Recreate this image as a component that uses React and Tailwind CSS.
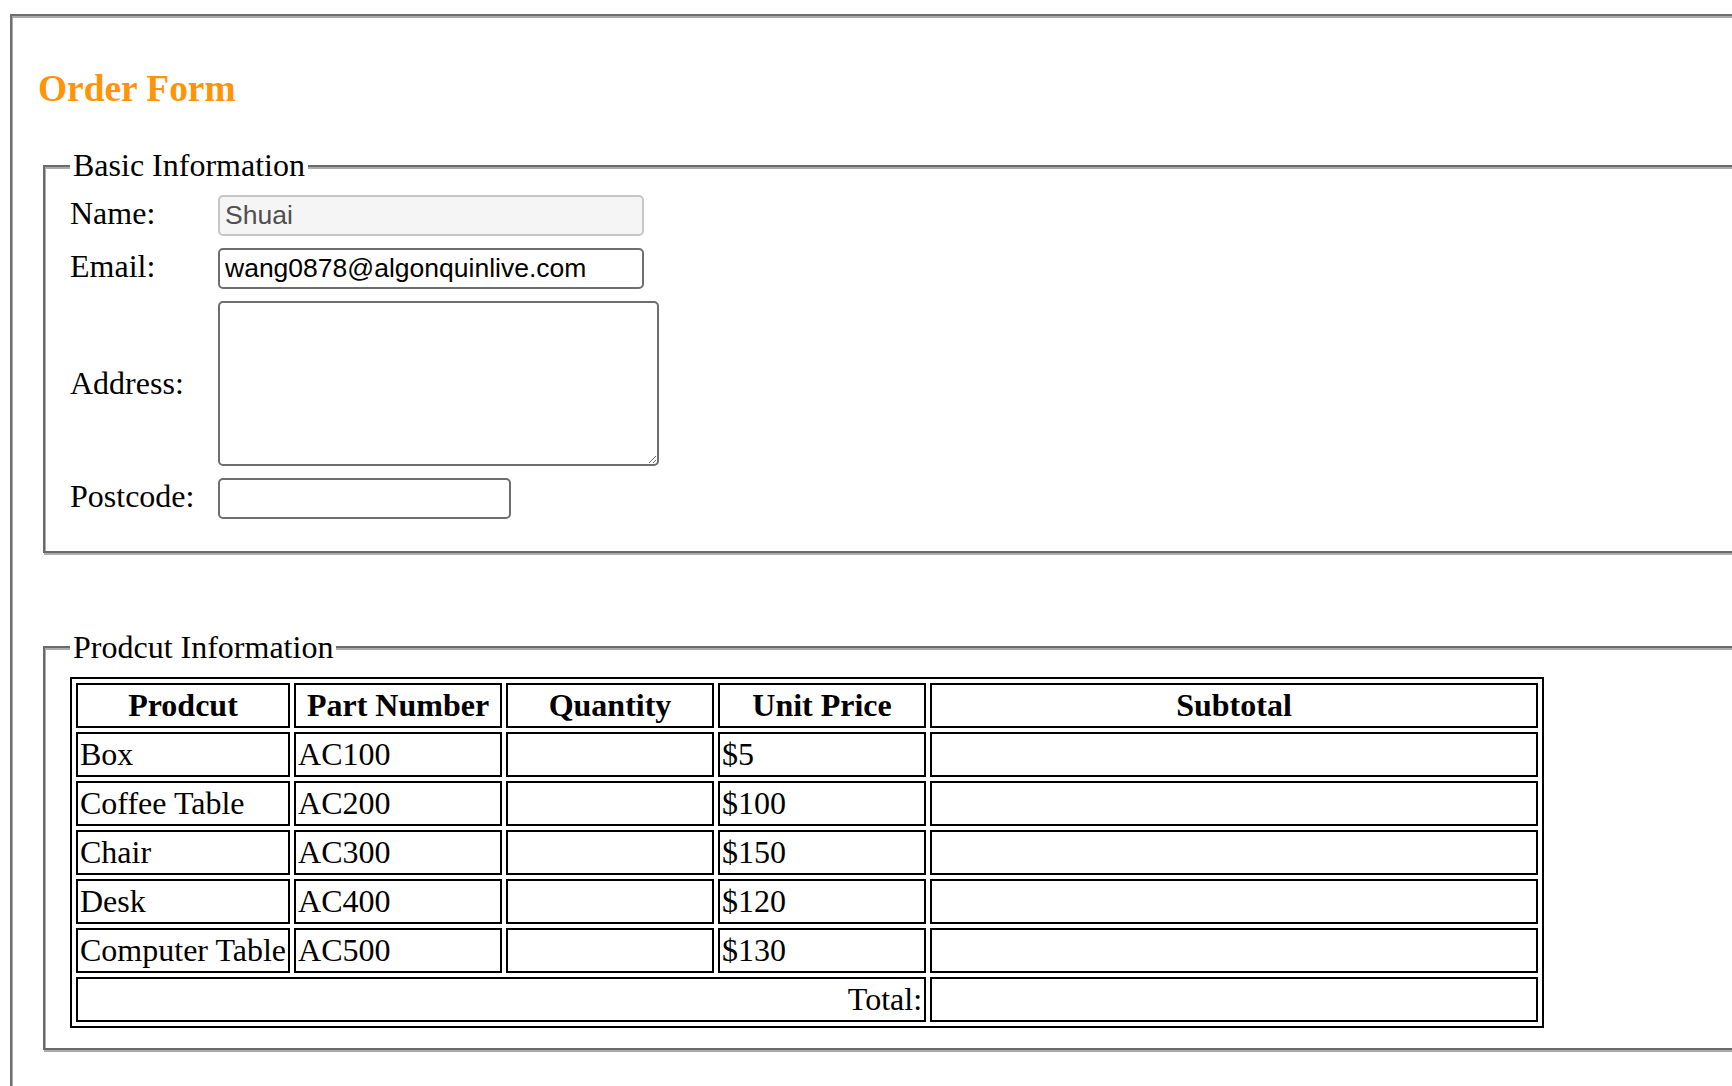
import React from 'react';

const PRODUCTS = [
  { name: 'Box', part: 'AC100', price: '$5' },
  { name: 'Coffee Table', part: 'AC200', price: '$100' },
  { name: 'Chair', part: 'AC300', price: '$150' },
  { name: 'Desk', part: 'AC400', price: '$120' },
  { name: 'Computer Table', part: 'AC500', price: '$130' },
];

const cell = 'border-2 border-black p-[2px] leading-[37px]';
const field = 'h-[41px] rounded-[5px] border-2 px-[5px] font-["Liberation_Sans",Arial,sans-serif] text-[26.5px] outline-none';

const Row = ({ label, lift, children }) => (
  <div className="flex items-center">
    <span className={lift ? 'w-[148px] pb-[4px] leading-[37px]' : 'w-[148px] leading-[37px]'}>{label}</span>
    {children}
  </div>
);

export default function App() {
  return (
    <div className="h-screen w-full overflow-hidden bg-white font-['Liberation_Serif','Times_New_Roman',serif] text-[32px] text-black">
      {/* outer frame */}
      <div className="ml-[10px] mt-[14px] min-h-[1100px] w-[1800px] border-l-2 border-t-2 border-[#6f6f6f] pl-[26px] pt-[51px] shadow-[inset_1px_2px_0_#ababab]">
        <h3 className="text-[37.4px] font-bold leading-[43px] text-[#ff9408]">Order Form</h3>

        {/* Basic Information */}
        <fieldset className="ml-[5px] mt-[37px] border-2 border-[#6a6a6a] pb-[31.5px] pl-[25px] pt-[11px] shadow-[inset_1px_2px_0_#ababab,1px_2px_0_#ababab]">
          <legend className="bg-white px-[3px] leading-[37px]">Basic Information</legend>
          <div className="flex flex-col gap-[12px]">
            <Row label="Name:" lift>
              <input
                type="text"
                value="Shuai"
                readOnly
                className={`${field} w-[426px] border-[#c6c6c6] bg-[#f5f5f5] text-[#4f4f4f]`}
              />
            </Row>
            <Row label="Email:" lift>
              <input
                type="text"
                defaultValue="wang0878@algonquinlive.com"
                className={`${field} w-[426px] border-[#6e6e6e] bg-white text-black`}
              />
            </Row>
            <Row label="Address:">
              <textarea className="h-[165px] w-[441px] resize rounded-[5px] border-2 border-[#6e6e6e] bg-white outline-none" />
            </Row>
            <Row label="Postcode:" lift>
              <input type="text" className={`${field} w-[293px] border-[#6e6e6e] bg-white`} />
            </Row>
          </div>
        </fieldset>

        {/* Product Information */}
        <fieldset className="ml-[5px] mt-[76px] border-2 border-[#6a6a6a] pb-[20px] pl-[25px] pt-[11px] shadow-[inset_1px_2px_0_#ababab,1px_2px_0_#ababab]">
          <legend className="bg-white px-[3px] leading-[37px]">Prodcut Information</legend>
          <table className="border-separate border-spacing-[4px] border-2 border-black">
            <thead>
              <tr>
                <th className={`${cell} text-center font-bold`}>Prodcut</th>
                <th className={`${cell} w-[208px] text-center font-bold`}>Part Number</th>
                <th className={`${cell} w-[208px] text-center font-bold`}>Quantity</th>
                <th className={`${cell} w-[208px] text-center font-bold`}>Unit Price</th>
                <th className={`${cell} w-[608px] text-center font-bold`}>Subtotal</th>
              </tr>
            </thead>
            <tbody>
              {PRODUCTS.map((p) => (
                <tr key={p.part}>
                  <td className={`${cell} whitespace-nowrap`}>{p.name}</td>
                  <td className={cell}>{p.part}</td>
                  <td className={cell}></td>
                  <td className={cell}>{p.price}</td>
                  <td className={cell}></td>
                </tr>
              ))}
              <tr>
                <td colSpan={4} className={`${cell} text-right`}>Total:</td>
                <td className={cell}></td>
              </tr>
            </tbody>
          </table>
        </fieldset>
      </div>
    </div>
  );
}
